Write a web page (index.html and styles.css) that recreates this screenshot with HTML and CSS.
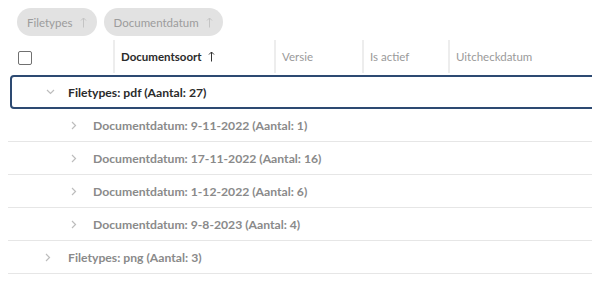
FILE: index.html
```html
<!DOCTYPE html>
<html lang="nl">
<head>
  <meta charset="UTF-8">
  <title>Documenten</title>
  <link rel="stylesheet" href="styles.css">
</head>
<body>
  <div class="chips">
    <span class="chip">Filetypes
      <svg class="arrow" width="7" height="11" viewBox="0 0 7 11"><path d="M3.5 10.5V1M1 3.5L3.5 1L6 3.5"/></svg>
    </span>
    <span class="chip">Documentdatum
      <svg class="arrow" width="7" height="11" viewBox="0 0 7 11"><path d="M3.5 10.5V1M1 3.5L3.5 1L6 3.5"/></svg>
    </span>
  </div>

  <div class="grid">
    <div class="header">
      <div class="cell cell-check"><span class="checkbox"></span></div>
      <div class="cell cell-soort sorted">Documentsoort
        <svg class="sort" width="7" height="11" viewBox="0 0 7 11"><path d="M3.5 10.5V1M1 3.5L3.5 1L6 3.5"/></svg>
      </div>
      <div class="cell cell-versie">Versie</div>
      <div class="cell cell-actief">Is actief</div>
      <div class="cell cell-datum">Uitcheckdatum</div>
    </div>

    <div class="group-row selected">
      <svg class="chevron" width="9" height="6" viewBox="0 0 9 6"><polyline points="1,1 4.5,4.5 8,1"/></svg>
      <span>Filetypes: pdf (Aantal: 27)</span>
    </div>
    <div class="group-row sub">
      <svg class="chevron" width="6" height="9" viewBox="0 0 6 9"><polyline points="1,1 4.5,4.5 1,8"/></svg>
      <span>Documentdatum: 9-11-2022 (Aantal: 1)</span>
    </div>
    <div class="group-row sub">
      <svg class="chevron" width="6" height="9" viewBox="0 0 6 9"><polyline points="1,1 4.5,4.5 1,8"/></svg>
      <span>Documentdatum: 17-11-2022 (Aantal: 16)</span>
    </div>
    <div class="group-row sub">
      <svg class="chevron" width="6" height="9" viewBox="0 0 6 9"><polyline points="1,1 4.5,4.5 1,8"/></svg>
      <span>Documentdatum: 1-12-2022 (Aantal: 6)</span>
    </div>
    <div class="group-row sub">
      <svg class="chevron" width="6" height="9" viewBox="0 0 6 9"><polyline points="1,1 4.5,4.5 1,8"/></svg>
      <span>Documentdatum: 9-8-2023 (Aantal: 4)</span>
    </div>
    <div class="group-row top">
      <svg class="chevron" width="6" height="9" viewBox="0 0 6 9"><polyline points="1,1 4.5,4.5 1,8"/></svg>
      <span>Filetypes: png (Aantal: 3)</span>
    </div>
  </div>
</body>
</html>
```

FILE: styles.css
```css
body {
  margin: 8px;
  font-family: Lato, "Liberation Sans", sans-serif;
  background-color: #fff;
  color: #333;
}
svg { fill: none; }
.chips { display: flex; gap: 7px; height: 28px; margin-left: 9px; }
.chip {
  display: flex;
  align-items: center;
  background-color: #e2e2e2;
  color: #9c9c9c;
  border-radius: 14px;
  padding: 0 10px;
  font-size: 11.5px;
}
.chip .arrow { stroke: #c4c4c4; stroke-width: 1; margin-left: 7px; }

.grid { margin-top: 4px; overflow: hidden; }
.header { display: flex; height: 35px; align-items: stretch; }
.cell {
  display: flex;
  align-items: center;
  padding-left: 6px;
  font-size: 11.5px;
  color: #9a9a9a;
}
.cell + .cell { border-left: 2px solid #ededed; margin: 0 0 2px; }
.cell-check { width: 95px; padding-left: 10px; }
.cell-soort { width: 153px; padding-left: 6px; }
.cell-versie { width: 80px; }
.cell-actief { width: 78px; }
.cell-datum { flex: 1; }
.sorted { color: #2b2b2b; font-weight: 700; }
.sort { stroke: #333; stroke-width: 1; margin-left: 6px; }
.checkbox {
  width: 12px; height: 12px;
  border: 1.5px solid #707070;
  border-radius: 2px;
}

.group-row {
  display: flex;
  align-items: center;
  height: 32px;
  border-bottom: 1px solid #e6e6e6;
  font-size: 12.2px;
  font-weight: 700;
  color: #8a8a8a;
}
.chevron { stroke: #bdbdbd; stroke-width: 1.2; }
.group-row.selected {
  height: 30px;
  margin-left: 2px;
  margin-right: -10px;
  border: 2px solid #2d4a72;
  border-radius: 4px;
  padding-left: 34px;
  color: #2b2b2b;
}
.group-row.selected .chevron { margin-right: 13px; }
.sub { padding-left: 63px; }
.sub .chevron { margin-right: 16px; }
.top { padding-left: 37px; }
.top .chevron { margin-right: 17px; }
```
